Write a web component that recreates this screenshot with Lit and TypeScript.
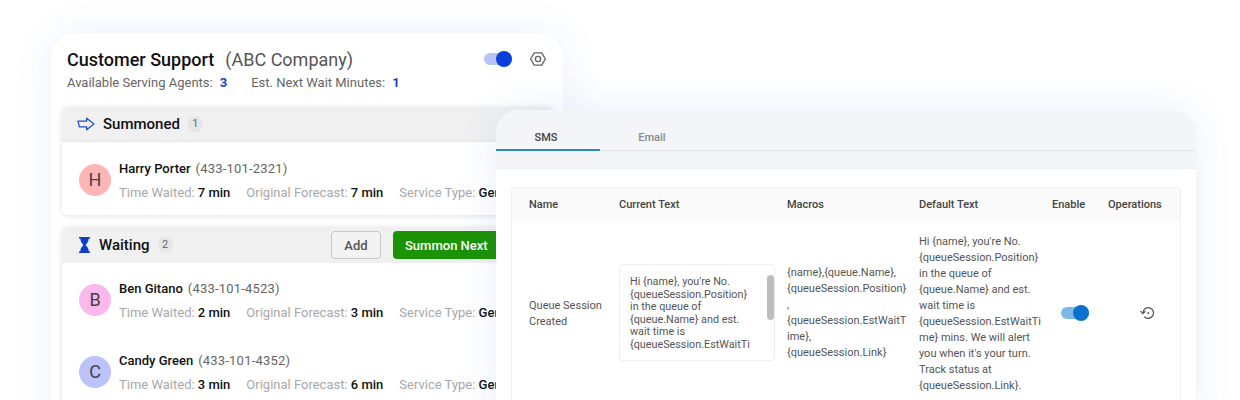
import { LitElement, css, html } from "lit";
import { customElement } from "lit/decorators.js";

interface Person {
  initial: string;
  color: string;
  name: string;
  phone: string;
  waited: string;
  forecast: string;
}

const waiting: Person[] = [
  { initial: "B", color: "#fbb8ec", name: "Ben Gitano", phone: "(433-101-4523)", waited: "2 min", forecast: "3 min" },
  { initial: "C", color: "#bcc2fb", name: "Candy Green", phone: "(433-101-4352)", waited: "3 min", forecast: "6 min" },
];

const harry: Person = {
  initial: "H",
  color: "#fdb5b5",
  name: "Harry Porter",
  phone: "(433-101-2321)",
  waited: "7 min",
  forecast: "7 min",
};

@customElement("app-root")
export class AppRoot extends LitElement {
  private renderPerson(p: Person) {
    return html`
      <div class="person">
        <div class="avatar" style="background:${p.color}">${p.initial}</div>
        <div class="info">
          <div class="name">${p.name}<span class="phone">${p.phone}</span></div>
          <div class="meta">
            <span>Time Waited: <b>${p.waited}</b></span>
            <span>Original Forecast: <b>${p.forecast}</b></span>
            <span>Service Type: <b>General</b></span>
          </div>
        </div>
      </div>
    `;
  }

  render() {
    return html`
      <div class="card support">
        <div class="top">
          <div class="title">Customer Support<span class="company">(ABC Company)</span></div>
          <div class="top-tools">
            <div class="switch blue"><i></i></div>
            <svg width="18" height="18" viewBox="0 0 18 18" fill="none" stroke="#666" stroke-width="1.4">
              <path d="M5.3 2.9h7.4L16.4 9l-3.7 6.1H5.3L1.6 9z" stroke-linejoin="round" />
              <circle cx="9" cy="9" r="2.6" />
            </svg>
          </div>
        </div>
        <div class="stats">
          <span>Available Serving Agents:<b>3</b></span>
          <span>Est. Next Wait Minutes:<b>1</b></span>
        </div>

        <div class="section summoned">
          <div class="section-head">
            <svg width="18" height="14" viewBox="0 0 18 14" fill="none" stroke="#1f4fc4" stroke-width="1.3">
              <path d="M1 4.2h8.6V1.2L17 7l-7.4 5.8V9.8H2.4z" stroke-linejoin="round" />
            </svg>
            <span class="section-title">Summoned</span>
            <span class="badge">1</span>
          </div>
          ${this.renderPerson(harry)}
        </div>

        <div class="section">
          <div class="section-head">
            <svg class="glass" width="11" height="16" viewBox="0 0 11 16" fill="#0f3fc8">
              <path d="M0 0h11v1.6H9.8C9.6 4.6 8 6.6 6.6 8c1.4 1.4 3 3.4 3.2 6.4H11V16H0v-1.6h1.2C1.4 11.4 3 9.4 4.4 8 3 6.6 1.4 4.6 1.2 1.6H0z" />
            </svg>
            <span class="section-title">Waiting</span>
            <span class="badge">2</span>
            <div class="actions">
              <button class="ghost">Add</button>
              <button class="primary">Summon Next</button>
            </div>
          </div>
          <div class="waiting-list">${waiting.map((p) => this.renderPerson(p))}</div>
        </div>
      </div>

      <div class="card templates">
        <div class="tabs-wrap">
          <div class="tabs">
            <div class="tab active">SMS</div>
            <div class="tab">Email</div>
          </div>
        </div>
        <div class="table-wrap">
          <div class="table">
            <div class="grid thead">
              <div>Name</div>
              <div>Current Text</div>
              <div>Macros</div>
              <div>Default Text</div>
              <div>Enable</div>
              <div>Operations</div>
            </div>
            <div class="grid row">
              <div class="nudge">Queue Session<br />Created</div>
              <div class="textarea">
                Hi {name}, you're No.<br />{queueSession.Position}<br />in the queue of<br />{queue.Name} and est.<br />wait
                time is<br />{queueSession.EstWaitTi
                <div class="thumb"></div>
              </div>
              <div>
                {name},{queue.Name},<br />{queueSession.Position}<br />,<br />{queueSession.EstWaitT<br />ime},<br />{queueSession.Link}
              </div>
              <div class="nudge">
                Hi {name}, you're No.<br />{queueSession.Position}<br />in the queue of<br />{queue.Name} and est.<br />wait
                time is<br />{queueSession.EstWaitTi<br />me} mins. We will alert<br />you when it's your turn.<br />Track
                status at<br />{queueSession.Link}.
              </div>
              <div><div class="switch sky"><i></i></div></div>
              <div class="op">
                <svg width="16" height="16" viewBox="0 0 16 16" fill="none" stroke="#555" stroke-width="1.3">
                  <path d="M3 8a5.3 5.3 0 1 1 1.7 3.9" stroke-linecap="round" />
                  <path d="M.9 6.4 3 8.6l2.2-2.2" stroke-linecap="round" stroke-linejoin="round" />
                  <circle cx="8.3" cy="8" r="1" fill="#555" stroke="none" />
                </svg>
              </div>
            </div>
          </div>
        </div>
      </div>
    `;
  }

  static styles = css`
    :host {
      display: block;
      position: relative;
      height: 400px;
      overflow: hidden;
      background: #fff;
      font-family: Roboto, "Liberation Sans", sans-serif;
    }

    .card {
      position: absolute;
      background: #fff;
      box-sizing: border-box;
    }

    /* left window */
    .support {
      left: 51px;
      top: 33px;
      width: 512px;
      height: 420px;
      padding: 13px 10px 0 11px;
      border-radius: 24px;
      box-shadow: 0 0 40px rgba(70, 110, 240, 0.1);
    }

    .top {
      display: flex;
      align-items: center;
      justify-content: space-between;
      padding: 0 6px 0 5px;
      height: 26px;
    }

    .title {
      font-size: 18px;
      font-weight: 500;
      color: #111;
    }

    .company {
      margin-left: 11px;
      font-weight: 400;
      color: #555;
    }

    .top-tools {
      display: flex;
      align-items: center;
      gap: 17px;
    }

    .switch {
      position: relative;
      width: 28px;
      height: 12px;
      border-radius: 6px;
    }

    .switch i {
      position: absolute;
      right: 0;
      top: -2px;
      width: 16px;
      height: 16px;
      border-radius: 50%;
    }

    .switch.blue {
      background: #b7c3f3;
    }

    .switch.blue i {
      background: #0b3fdc;
    }

    .switch.sky {
      margin-left: 9px;
      background: #7fb8e6;
    }

    .switch.sky i {
      background: #0a72cc;
    }

    .stats {
      display: flex;
      gap: 24px;
      padding: 3px 0 0 5px;
      font-size: 13px;
      line-height: 16px;
      color: #666;
    }

    .stats b {
      margin-left: 7px;
      font-weight: 700;
      color: #1746b8;
    }

    .section {
      margin-top: 12px;
      background: #fff;
      border-radius: 6px;
      box-shadow: 0 1px 6px rgba(0, 0, 0, 0.12);
      overflow: hidden;
    }

    .summoned {
      margin-top: 16px;
      height: 108px;
    }

    .section-head {
      display: flex;
      align-items: center;
      height: 36px;
      padding-left: 15px;
      background: #f0f0f0;
      box-sizing: border-box;
    }

    .summoned .section-head {
      height: 35px;
      border-bottom: 1px solid #e6e6e6;
    }

    .section-title {
      margin-left: 8px;
      font-size: 15px;
      font-weight: 500;
      color: #111;
    }

    .glass {
      margin: 0 1px 0 2px;
    }

    .badge {
      margin-left: 8px;
      width: 15px;
      height: 16px;
      border-radius: 8px;
      background: #e6e6e6;
      color: #666;
      font-size: 11px;
      line-height: 16px;
      text-align: center;
    }

    .actions {
      display: flex;
      gap: 12px;
      margin-left: auto;
      padding-right: 48px;
    }

    button {
      height: 28px;
      border-radius: 4px;
      font-family: inherit;
      font-size: 13px;
      font-weight: 500;
      box-sizing: border-box;
    }

    .ghost {
      width: 50px;
      background: #f3f3f3;
      border: 1px solid #c8c8c8;
      color: #555;
    }

    .primary {
      width: 112px;
      padding: 0 0 0 12px;
      background: #1a9305;
      border: none;
      color: #fff;
      text-align: left;
    }

    .person {
      display: flex;
      align-items: center;
      gap: 8px;
      height: 72px;
      padding-left: 17px;
      white-space: nowrap;
    }

    .summoned .person {
      margin-top: 2px;
    }

    .waiting-list {
      padding-top: 1px;
    }

    .avatar {
      flex: none;
      width: 32px;
      height: 32px;
      border-radius: 50%;
      color: #444;
      font-size: 18px;
      line-height: 32px;
      text-align: center;
    }

    .info {
      padding-top: 2px;
    }

    .name {
      font-size: 13px;
      font-weight: 500;
      line-height: 16px;
      color: #111;
    }

    .phone {
      margin-left: 5px;
      font-weight: 400;
      letter-spacing: 0.2px;
      color: #666;
    }

    .meta {
      display: flex;
      gap: 16px;
      margin-top: 8px;
      font-size: 13px;
      line-height: 16px;
      color: #a8a8a8;
    }

    .meta b {
      font-weight: 500;
      color: #111;
    }

    /* right window */
    .templates {
      left: 496px;
      top: 110px;
      width: 700px;
      height: 320px;
      border-radius: 24px 24px 0 0;
      box-shadow: 0 0 40px rgba(70, 110, 240, 0.11);
    }

    .tabs-wrap {
      height: 59px;
      background: #f4f5f8;
      border-radius: 24px 24px 0 0;
      border-bottom: 1px solid #eeeff2;
      box-sizing: border-box;
    }

    .tabs {
      display: flex;
      height: 40px;
      border-bottom: 1px solid #e3e5e9;
    }

    .tab {
      width: 104px;
      padding-top: 21px;
      box-sizing: border-box;
      font-size: 11px;
      font-weight: 500;
      line-height: 13px;
      text-align: center;
      color: #85888c;
    }

    .tab.active {
      padding-right: 4px;
      color: #444;
      border-bottom: 2px solid #2a8ac9;
      height: 41px;
    }

    .table-wrap {
      padding: 18px 15px 0;
    }

    .table {
      border: 1px solid #f0f0f0;
      border-radius: 4px;
      font-size: 11px;
      line-height: 16px;
      color: #555;
    }

    .grid {
      display: grid;
      grid-template-columns: 90px 168px 132px 133px 56px 1fr;
      padding-left: 17px;
      white-space: nowrap;
    }

    .thead {
      height: 33px;
      align-items: center;
      background: #fafafa;
      font-weight: 500;
      color: #444;
    }

    .row {
      grid-template-rows: 160px;
      align-items: center;
      padding-top: 12px;
      padding-bottom: 12px;
    }

    .nudge {
      margin-top: 2px;
    }

    .textarea {
      position: relative;
      width: 156px;
      height: 97px;
      margin-bottom: 1px;
      padding: 11px 0 0 10px;
      box-sizing: border-box;
      border: 1px solid #eeeeee;
      border-radius: 4px;
      font-size: 10.8px;
      line-height: 12.6px;
      overflow: hidden;
    }

    .thumb {
      position: absolute;
      right: 0;
      top: 10px;
      width: 7px;
      height: 45px;
      border-radius: 4px;
      background: #bdbdbd;
    }

    .op {
      display: flex;
      padding-left: 32px;
    }
  `;
}

declare global {
  interface HTMLElementTagNameMap {
    "app-root": AppRoot;
  }
}
